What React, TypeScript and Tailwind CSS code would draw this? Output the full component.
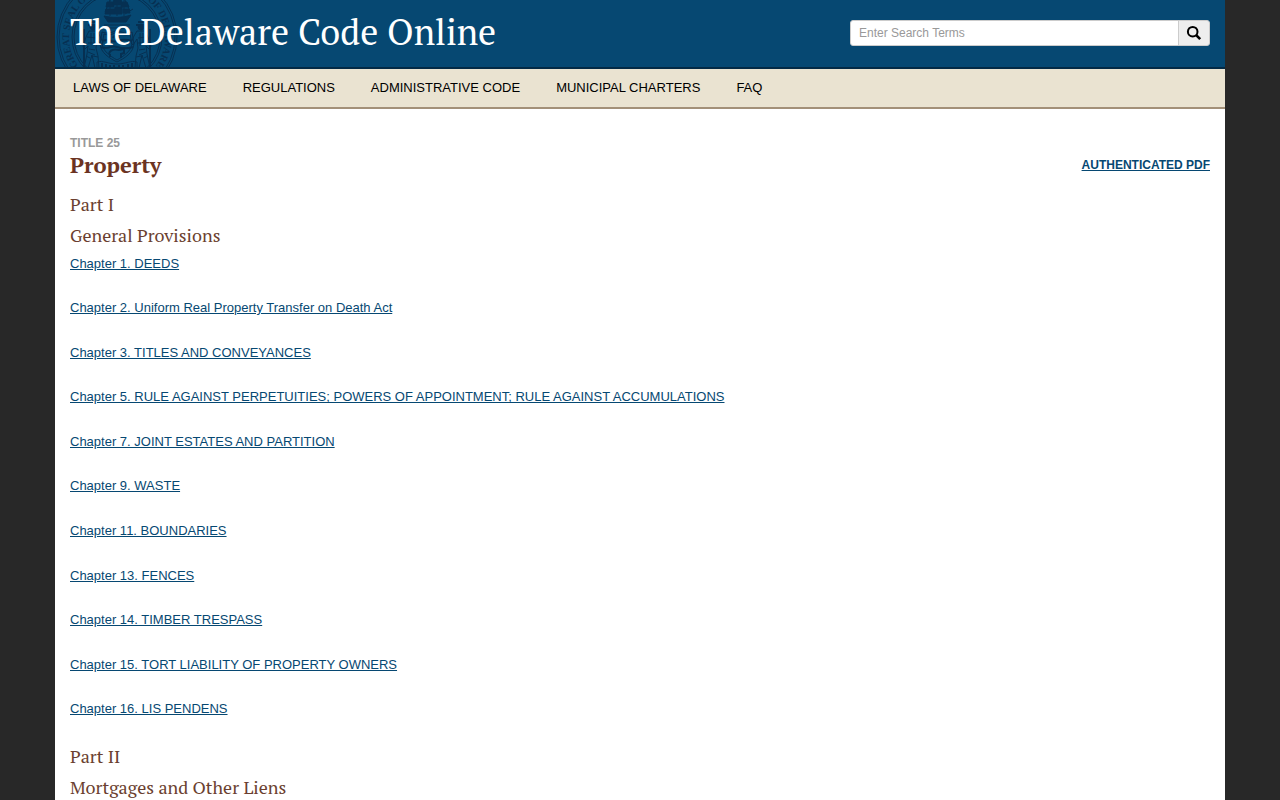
import type { FormEvent } from 'react'

const navItems = [
  'LAWS OF DELAWARE',
  'REGULATIONS',
  'ADMINISTRATIVE CODE',
  'MUNICIPAL CHARTERS',
  'FAQ',
]

const parts = [
  {
    label: 'Part I',
    name: 'General Provisions',
    chapters: [
      'Chapter 1. DEEDS',
      'Chapter 2. Uniform Real Property Transfer on Death Act',
      'Chapter 3. TITLES AND CONVEYANCES',
      'Chapter 5. RULE AGAINST PERPETUITIES; POWERS OF APPOINTMENT; RULE AGAINST ACCUMULATIONS',
      'Chapter 7. JOINT ESTATES AND PARTITION',
      'Chapter 9. WASTE',
      'Chapter 11. BOUNDARIES',
      'Chapter 13. FENCES',
      'Chapter 14. TIMBER TRESPASS',
      'Chapter 15. TORT LIABILITY OF PROPERTY OWNERS',
      'Chapter 16. LIS PENDENS',
    ],
  },
  { label: 'Part II', name: 'Mortgages and Other Liens', chapters: [] },
]

function Supporter() {
  return (
    <>
      <circle cx="38" cy="51" r="3" fill="currentColor" />
      <path d="M33 49h10 M35 46h6" strokeWidth="2" />
      <path d="M34 55l8 0 3 5 3 7-2 2-4-6-1 9 2 8 1 12h-4l-3-13-4 13h-4l3-14 1-8-3 3-2-2 3-10z" />
      <path d="M36 57v12 M39 57v13 M32 61l9 1 M33 67h8 M34 73l6 1 M31 80l4 2 M38 80l5 1 M33 76l7 3" />
      <path d="M29 53v38" strokeWidth="2" />
    </>
  )
}

function StateSeal() {
  return (
    <svg
      aria-hidden="true"
      viewBox="0 0 124 92"
      className="absolute -top-6 left-0 w-[124px] text-[#063052]"
      fill="none"
      stroke="currentColor"
    >
      <defs>
        <path id="seal-ring" d="M38 103 A48 48 0 1 1 86 103" />
      </defs>
      <circle cx="62" cy="61" r="60" strokeWidth="1" />
      <circle cx="62" cy="61" r="58" strokeWidth="1" />
      <circle cx="62" cy="61" r="45" strokeWidth="1" />
      <circle cx="62" cy="61" r="43" strokeWidth="1" />
      <text
        fill="currentColor"
        stroke="none"
        textAnchor="middle"
        className="font-['Liberation_Serif',serif] text-[10px] font-bold"
      >
        <textPath href="#seal-ring" startOffset="50%">
          GREAT SEAL OF THE STATE OF DELAWARE
        </textPath>
      </text>
      {/* Ship crest */}
      <path d="M49 40c8 2 18 2 27-1l-5 7H53z" fill="currentColor" />
      <path d="M55 22v18 M62 18v22 M69 22v18 M70 38l8-5 M50 36l5-12 M69 22l6 13" />
      <path d="M52 26h6l1 5h-8z M59 23h7l1 6h-9z M67 26h5l2 5h-8z M51 33h8v5h-9z M60 31h7v7h-8z M68 33h6l1 4h-7z" fill="currentColor" />
      <path d="M49 49h26 M52 52h20" />
      {/* Shield */}
      <path d="M47 56c5 2 10 1 15-2 5 3 10 4 15 2l2 12c-1 9-9 14-17 18-8-4-16-9-17-18z" />
      <path d="M49 58c5 2 9 0 13-2 4 2 8 4 13 2l2 10c-1 7-8 12-15 16-7-4-14-9-15-16z" />
      <path d="M47 65c6-3 10 2 15 0s9-2 15 0 M46 71c6 3 10-2 16 0s10 2 16 0" strokeWidth="2" />
      <path d="M54 78c1-4 5-5 10-4l5-1v4l-3 1v4 M55 78v3 M58 62c1-3 5-3 6 0" strokeWidth="2" />
      <Supporter />
      <g transform="translate(124 0) scale(-1 1)">
        <Supporter />
      </g>
      {/* Motto ribbon */}
      <path d="M42 86c6-2 11 2 20 2s14-4 20-2v6H42z" />
      <path d="M47 87v4 M51 88v3 M55 89v3 M59 89v3 M64 89v3 M68 89v3 M73 88v3 M77 87v4" strokeWidth="2" />
    </svg>
  )
}

function SearchForm() {
  const handleSubmit = (event: FormEvent) => event.preventDefault()

  return (
    <form role="search" onSubmit={handleSubmit} className="flex h-[26px] w-[360px] shrink-0">
      <input
        type="text"
        aria-label="Search terms"
        placeholder="Enter Search Terms"
        className="min-w-0 flex-1 rounded-l-[3px] border border-[#ccc] bg-white px-2 text-xs text-[#555] placeholder:text-[#999]"
      />
      <button
        type="submit"
        aria-label="Search"
        className="-ml-px flex w-8 items-center justify-center rounded-r-[3px] border border-[#ccc] bg-[#eee] text-black"
      >
        <svg viewBox="0 0 16 16" className="size-4" fill="none" stroke="currentColor">
          <circle cx="6.7" cy="6.7" r="4.8" strokeWidth="2" />
          <path d="M10.2 10.2l4 4" strokeWidth="2.6" />
        </svg>
      </button>
    </form>
  )
}

export default function App() {
  return (
    <div className="min-h-screen bg-[#282828] font-['Liberation_Sans',Arial,sans-serif] text-[13px] leading-[1.43]">
      <div className="mx-auto min-h-screen max-w-[1170px] bg-white">
        <header className="relative flex items-center justify-between overflow-hidden border-b-2 border-[#032a45] bg-[#064872] px-[15px] pt-5 pb-[21px]">
          <StateSeal />
          <h1 className="relative -mt-3 -mb-2.5 font-['PT_Serif','Liberation_Serif',serif] text-4xl leading-[48px] text-white">
            The Delaware Code Online
          </h1>
          <SearchForm />
        </header>

        <nav aria-label="Main" className="border-b-2 border-[#a39078] bg-[#eae3d1]">
          <ul className="flex flex-wrap">
            {navItems.map((item) => (
              <li key={item}>
                <a href="#" className="block px-[18px] pt-[10px] pb-[9px] text-black">
                  {item}
                </a>
              </li>
            ))}
          </ul>
        </nav>

        <main className="px-[15px] pt-6">
          <div className="mb-4 flex items-center justify-between">
            <div>
              <h4 className="text-xs leading-5 font-bold text-[#999]">TITLE 25</h4>
              <h2 className="font-['PT_Serif','Liberation_Serif',serif] text-[22px] leading-6 font-bold text-[#6b3322]">
                Property
              </h2>
            </div>
            <a href="#" className="mt-5 text-xs font-bold text-[#064872] underline">
              AUTHENTICATED PDF
            </a>
          </div>

          {parts.map((part) => (
            <section key={part.label} className="mb-[26px]">
              <h3 className="mb-2 font-['PT_Serif','Liberation_Serif',serif] text-lg leading-[23px] text-[#6b3f30]">
                {part.label}
              </h3>
              <h3 className="mb-2 font-['PT_Serif','Liberation_Serif',serif] text-lg leading-[23px] text-[#6b3f30]">
                {part.name}
              </h3>
              <ul className="flex flex-col gap-[26px]">
                {part.chapters.map((chapter) => (
                  <li key={chapter}>
                    <a href="#" className="text-[#064872] underline">
                      {chapter}
                    </a>
                  </li>
                ))}
              </ul>
            </section>
          ))}
        </main>
      </div>
    </div>
  )
}
